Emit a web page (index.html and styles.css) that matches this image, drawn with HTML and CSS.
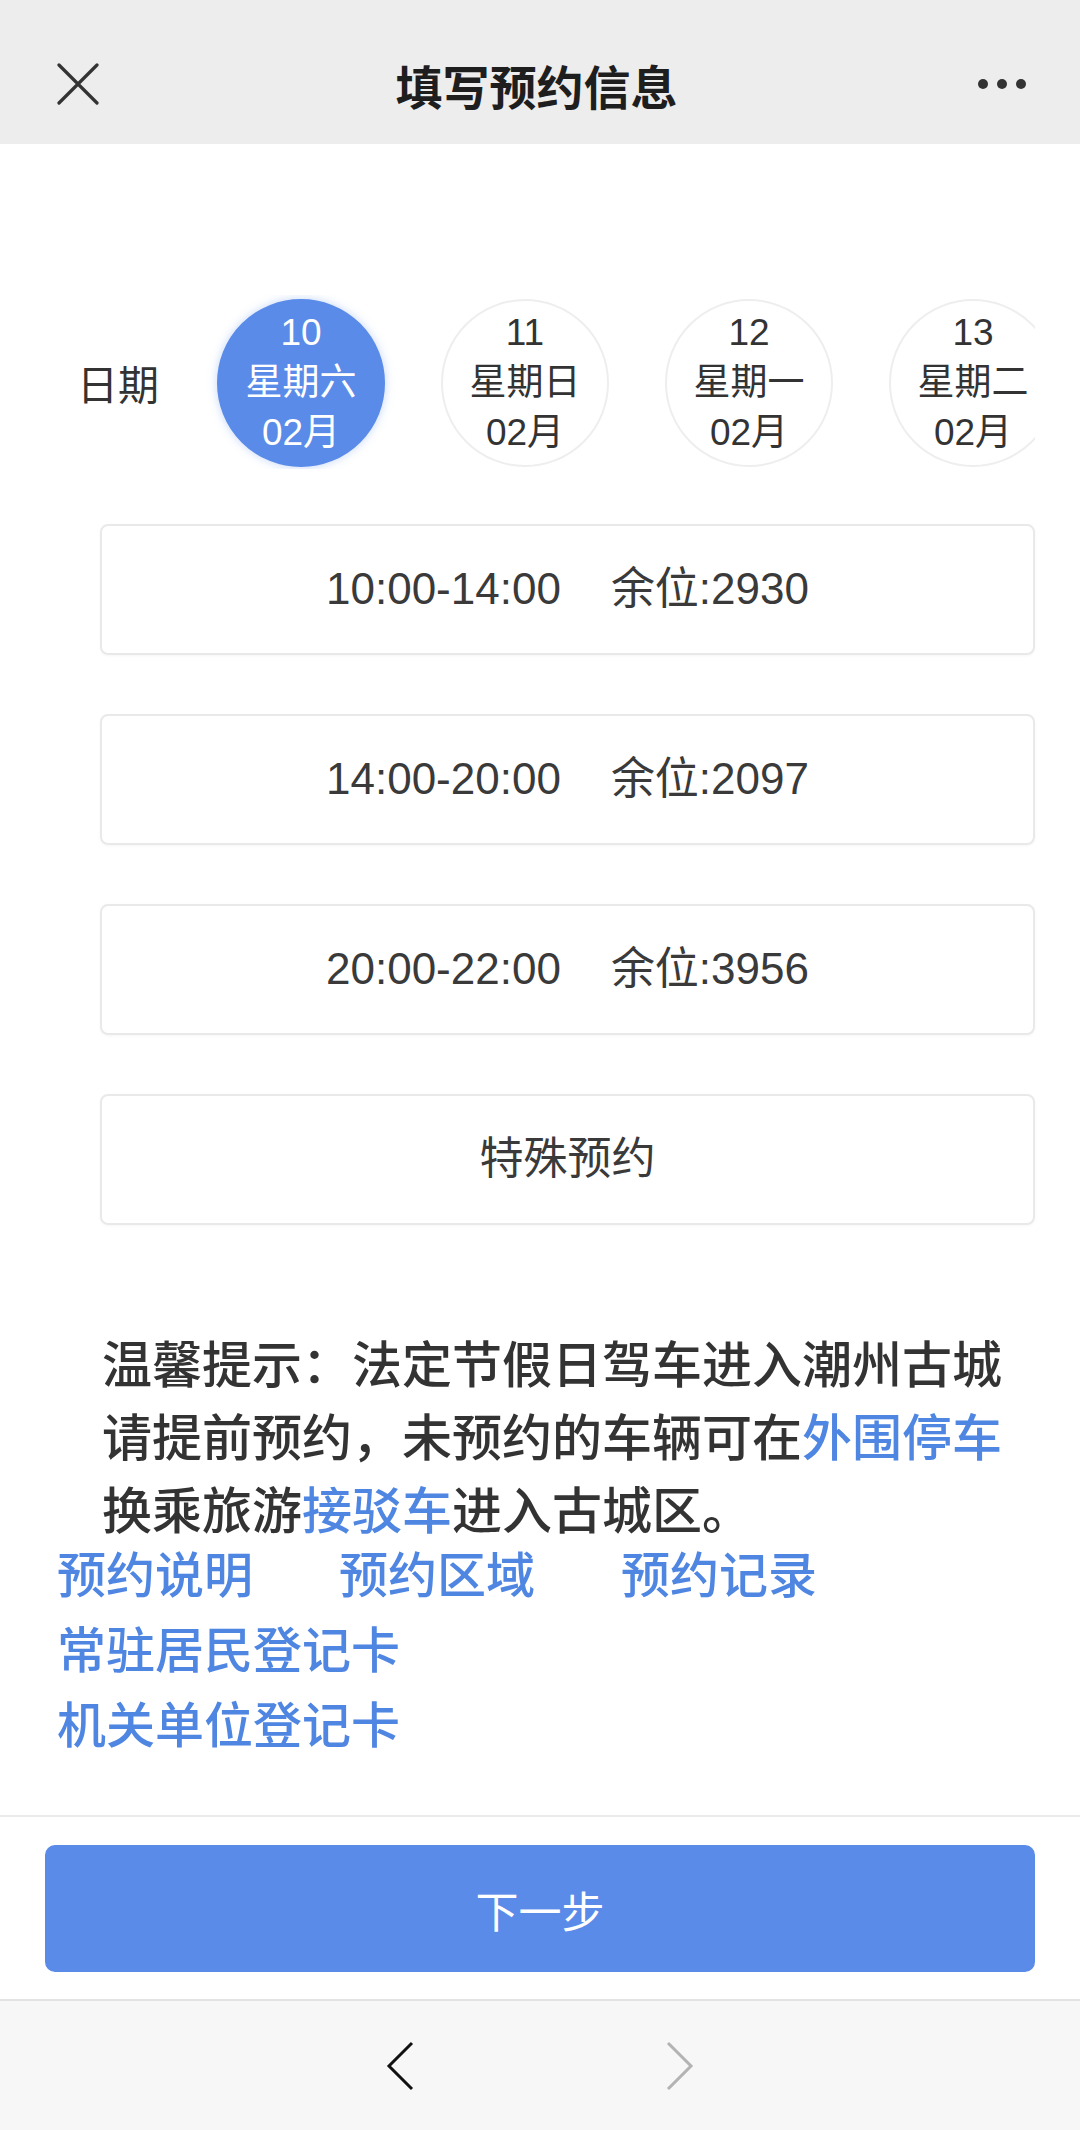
FILE: index.html
```html
<!DOCTYPE html>
<html lang="zh-CN">
<head>
    <meta charset="UTF-8">
    <meta name="viewport" content="width=device-width, initial-scale=1.0">
    <title>填写预约信息</title>
    <link rel="stylesheet" href="styles.css">
</head>
<body>
<div class="page">
    <div class="top-bar">
        <svg class="close-icon" width="42" height="42" viewBox="0 0 42 42">
            <path d="M2 2 L40 40 M40 2 L2 40" stroke="#333" stroke-width="3.2" stroke-linecap="round" fill="none"/>
        </svg>
        <div class="top-title">填写预约信息</div>
        <div class="more-dots"><span></span><span></span><span></span></div>
    </div>

    <div class="main">
        <div class="date-row">
            <div class="date-label">日期</div>
            <div class="date-scroll">
                <div class="date-item active">
                    <div>10</div>
                    <div>星期六</div>
                    <div>02月</div>
                </div>
                <div class="date-item">
                    <div>11</div>
                    <div>星期日</div>
                    <div>02月</div>
                </div>
                <div class="date-item">
                    <div>12</div>
                    <div>星期一</div>
                    <div>02月</div>
                </div>
                <div class="date-item">
                    <div>13</div>
                    <div>星期二</div>
                    <div>02月</div>
                </div>
            </div>
        </div>

        <div class="slot-list">
            <div class="slot">10:00-14:00<span class="seats">余位:2930</span></div>
            <div class="slot">14:00-20:00<span class="seats">余位:2097</span></div>
            <div class="slot">20:00-22:00<span class="seats">余位:3956</span></div>
            <div class="slot">特殊预约</div>
        </div>

        <p class="tips">温馨提示：法定节假日驾车进入潮州古城请提前预约，未预约的车辆可在<span class="link-text">外围停车</span>换乘旅游<span class="link-text">接驳车</span>进入古城区。</p>

        <div class="links">
            <div class="link-row">
                <a href="#">预约说明</a>
                <a href="#">预约区域</a>
                <a href="#">预约记录</a>
            </div>
            <div class="link-row"><a href="#">常驻居民登记卡</a></div>
            <div class="link-row"><a href="#">机关单位登记卡</a></div>
        </div>
    </div>

    <div class="footer">
        <button class="next-btn">下一步</button>
    </div>

    <div class="nav-bar">
        <svg width="30" height="50" viewBox="0 0 30 50">
            <path d="M27 2 L4 25 L27 48" stroke="#111" stroke-width="3" fill="none"/>
        </svg>
        <svg width="30" height="50" viewBox="0 0 30 50">
            <path d="M3 2 L26 25 L3 48" stroke="#b3b3b3" stroke-width="3" fill="none"/>
        </svg>
    </div>
</div>
</body>
</html>
```

FILE: styles.css
```css
body {
    margin: 0;
    font-family: "Liberation Sans", "Noto Sans CJK SC", sans-serif;
    color: #333;
    background-color: #fff;
}
.page {
    display: flex;
    flex-direction: column;
    min-height: 100vh;
}
.top-bar {
    height: 144px;
    box-sizing: border-box;
    background-color: #ededed;
    display: flex;
    align-items: center;
    padding: 24px 54px 0 57px;
    flex-shrink: 0;
}
.close-icon {
    flex-shrink: 0;
}
.top-title {
    flex: 1;
    text-align: center;
    font-size: 47px;
    font-weight: bold;
    color: #1e1e1e;
    font-family: "Noto Sans CJK SC", sans-serif;
    padding-right: 4px;
}
.more-dots {
    display: flex;
    gap: 9px;
}
.more-dots span {
    width: 10px;
    height: 10px;
    border-radius: 50%;
    background-color: #333;
}
.main {
    padding-top: 151px;
}
.date-row {
    display: flex;
    align-items: center;
}
.date-label {
    margin-left: 77px;
    width: 128px;
    font-size: 41px;
    font-family: "Noto Sans CJK SC", sans-serif;
}
.date-scroll {
    flex: 1;
    margin-right: 45px;
    overflow: hidden;
    display: flex;
    gap: 56px;
    padding: 4px 0 2px 12px;
}
.date-item {
    flex: none;
    width: 168px;
    height: 168px;
    box-sizing: border-box;
    border-radius: 50%;
    border: 2px solid #eeeeee;
    display: flex;
    flex-direction: column;
    align-items: center;
    justify-content: center;
    font-size: 37px;
    line-height: 50px;
    color: #333;
}
.date-item.active {
    background-color: #5a8be8;
    border-color: #5a8be8;
    color: #fff;
    box-shadow: 0 0 10px rgba(90, 139, 232, 0.35);
}
.slot-list {
    margin: 55px 45px 0 100px;
    display: flex;
    flex-direction: column;
    gap: 59px;
}
.slot {
    height: 131px;
    box-sizing: border-box;
    border: 2px solid #e9e9e9;
    border-radius: 8px;
    box-shadow: 0 1px 3px rgba(0, 0, 0, 0.04);
    text-align: center;
    line-height: 125px;
    font-size: 44px;
    color: #3a3a3a;
}
.seats {
    margin-left: 50px;
}
.tips {
    margin: 100px 0 0 102px;
    width: 925px;
    font-size: 50px;
    line-height: 73px;
    font-weight: 500;
    color: #333;
    font-family: "Noto Sans CJK SC", sans-serif;
}
.link-text {
    color: #4f86e2;
}
.links {
    margin: -10px 0 0 57px;
    font-family: "Noto Sans CJK SC", sans-serif;
}
.link-row {
    display: flex;
    gap: 86px;
    line-height: 75px;
}
.link-row a {
    font-size: 49px;
    font-weight: 500;
    color: #4f86e2;
    text-decoration: none;
}
.footer {
    margin-top: auto;
    border-top: 2px solid #ebebeb;
    padding: 28px 45px 27px;
}
.next-btn {
    display: block;
    width: 100%;
    height: 127px;
    border: none;
    border-radius: 10px;
    background-color: #5a8be9;
    color: #fff;
    font-size: 43px;
    font-family: "Noto Sans CJK SC", sans-serif;
}
.nav-bar {
    height: 129px;
    border-top: 2px solid #e3e3e3;
    background-color: #f7f7f7;
    display: flex;
    align-items: center;
    justify-content: center;
    gap: 250px;
}
```
